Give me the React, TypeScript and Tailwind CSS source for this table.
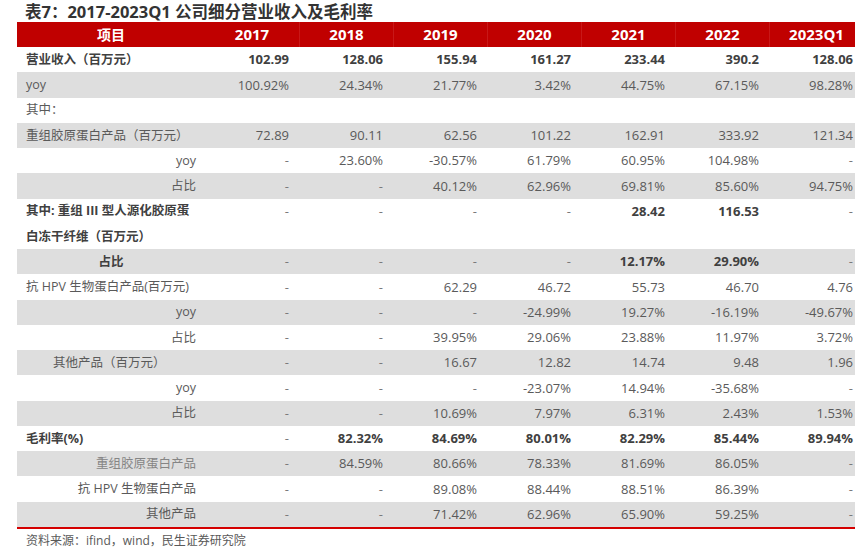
const font = { fontFamily: '"Open Sans", "Noto Sans CJK SC", sans-serif' };

type Row = {
  label: string;
  sub?: string;
  align: "left" | "right" | "center" | "indent";
  bold?: boolean;
  gray?: boolean;
  labelColor?: string;
  values: string[];
};

const rows: Row[] = [
  { label: "营业收入（百万元）", align: "left", bold: true, values: ["102.99", "128.06", "155.94", "161.27", "233.44", "390.2", "128.06"] },
  { label: "yoy", align: "left", gray: true, values: ["100.92%", "24.34%", "21.77%", "3.42%", "44.75%", "67.15%", "98.28%"] },
  { label: "其中：", align: "left", values: ["", "", "", "", "", "", ""] },
  { label: "重组胶原蛋白产品（百万元）", align: "left", gray: true, values: ["72.89", "90.11", "62.56", "101.22", "162.91", "333.92", "121.34"] },
  { label: "yoy", align: "right", values: ["-", "23.60%", "-30.57%", "61.79%", "60.95%", "104.98%", "-"] },
  { label: "占比", align: "right", gray: true, values: ["-", "-", "40.12%", "62.96%", "69.81%", "85.60%", "94.75%"] },
  { label: "其中: 重组 III 型人源化胶原蛋", sub: "白冻干纤维（百万元）", align: "left", bold: true, values: ["-", "-", "-", "-", "28.42", "116.53", "-"] },
  { label: "占比", align: "center", bold: true, gray: true, values: ["-", "-", "-", "-", "12.17%", "29.90%", "-"] },
  { label: "抗 HPV 生物蛋白产品(百万元)", align: "left", values: ["-", "-", "62.29", "46.72", "55.73", "46.70", "4.76"] },
  { label: "yoy", align: "right", gray: true, values: ["-", "-", "-", "-24.99%", "19.27%", "-16.19%", "-49.67%"] },
  { label: "占比", align: "right", values: ["-", "-", "39.95%", "29.06%", "23.88%", "11.97%", "3.72%"] },
  { label: "其他产品（百万元）", align: "indent", gray: true, values: ["-", "-", "16.67", "12.82", "14.74", "9.48", "1.96"] },
  { label: "yoy", align: "right", values: ["-", "-", "-", "-23.07%", "14.94%", "-35.68%", "-"] },
  { label: "占比", align: "right", gray: true, values: ["-", "-", "10.69%", "7.97%", "6.31%", "2.43%", "1.53%"] },
  { label: "毛利率(%)", align: "left", bold: true, values: ["-", "82.32%", "84.69%", "80.01%", "82.29%", "85.44%", "89.94%"] },
  { label: "重组胶原蛋白产品", align: "right", gray: true, labelColor: "text-[#858585]", values: ["-", "84.59%", "80.66%", "78.33%", "81.69%", "86.05%", "-"] },
  { label: "抗 HPV 生物蛋白产品", align: "right", values: ["-", "-", "89.08%", "88.44%", "88.51%", "86.39%", "-"] },
  { label: "其他产品", align: "right", gray: true, values: ["-", "-", "71.42%", "62.96%", "65.90%", "59.25%", "-"] },
];

const years = ["2017", "2018", "2019", "2020", "2021", "2022", "2023Q1"];

const alignClass = {
  left: "justify-start pl-[9px]",
  right: "justify-end pr-[9px]",
  center: "justify-center",
  indent: "justify-start pl-[36px]",
};

const TableRow = ({ row }: { row: Row }) => {
  const weight = row.bold ? "font-bold text-[#404040]" : "text-[#5a5a5a]";
  return (
    <div className={`flex ${row.gray ? "bg-[#dedede]" : "bg-white"} ${row.sub ? "h-[50.5px]" : "h-[25.25px]"}`}>
      <div className={`w-[188px] shrink-0 text-[12.5px] ${weight} ${row.labelColor ?? ""}`}>
        <div className={`flex h-[25.25px] items-center pt-px ${alignClass[row.align]}`}>{row.label}</div>
        {row.sub && <div className={`flex h-[25.25px] items-center pt-px ${alignClass[row.align]}`}>{row.sub}</div>}
      </div>
      {row.values.map((v, i) => (
        <div
          key={i}
          className={`flex h-[25.25px] w-[94px] shrink-0 items-center justify-end pr-[10px] pt-px text-[13px] ${
            v === "-" ? "font-normal text-[#7a7a7a]" : weight
          }`}
        >
          {v}
        </div>
      ))}
    </div>
  );
};

export default function App() {
  return (
    <div className="h-[550px] w-[855px] overflow-hidden bg-white" style={font}>
      <div className="w-[846px] ml-[17px]">
        <h1 className="h-[22px] pl-[8px] text-[16.5px] font-bold leading-[23px] text-[#333333]">
          表7：2017-2023Q1 公司细分营业收入及毛利率
        </h1>
        <div className="flex h-[25px] bg-[#c00000] text-[15px] font-bold text-white">
          <div className="flex w-[188px] shrink-0 items-center justify-center text-[14px]">项目</div>
          {years.map((y, i) => (
            <div
              key={y}
              className={`flex w-[94px] shrink-0 items-center justify-center ${i > 0 ? "border-l border-[#c81818]" : ""}`}
            >
              {y}
            </div>
          ))}
        </div>
        {rows.map((r, i) => (
          <TableRow key={i} row={r} />
        ))}
        <div className="h-[2px] bg-[#d40000]" />
        <p className="pl-[9px] text-[12px] leading-[24px] text-[#595959]">资料来源：ifind，wind，民生证券研究院</p>
      </div>
    </div>
  );
}
